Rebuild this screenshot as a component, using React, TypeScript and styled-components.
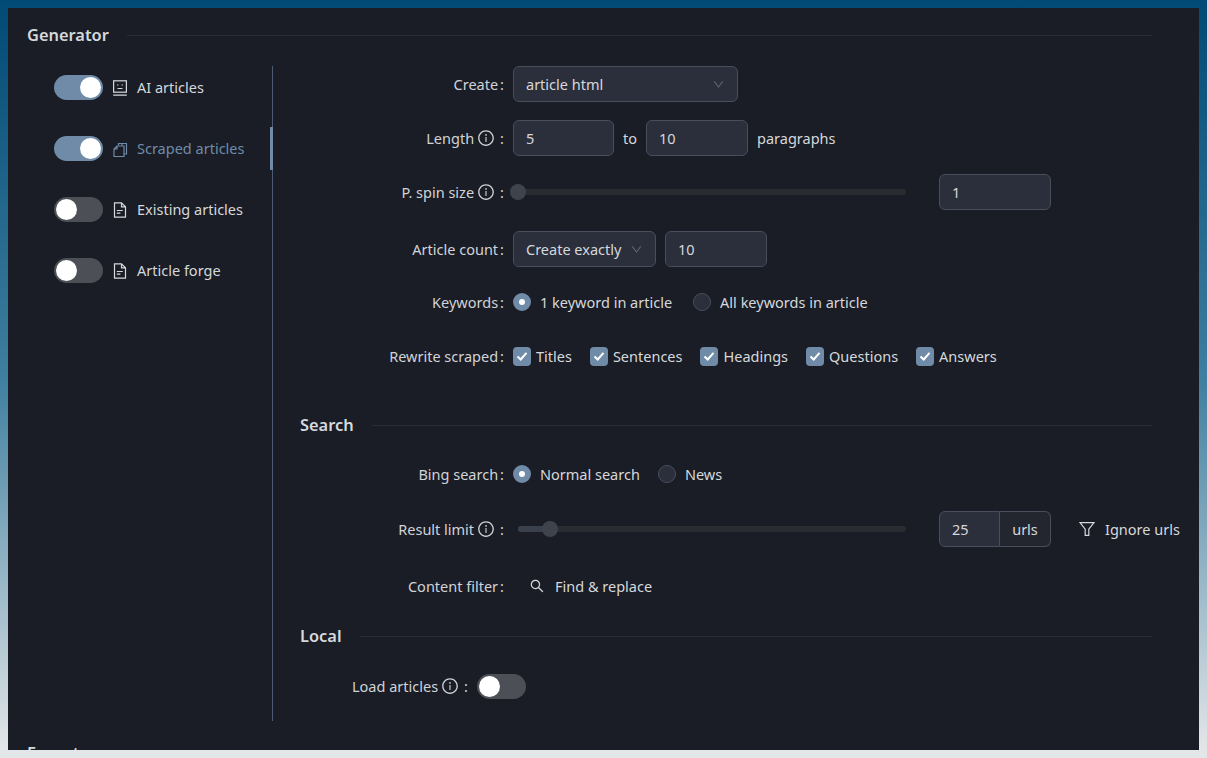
import React from 'react'
import styled, { createGlobalStyle } from 'styled-components'
import { AiOutlineDown, AiOutlineInfoCircle, AiOutlineSearch } from 'react-icons/ai'

const GlobalStyle = createGlobalStyle`
  html, body {
    margin: 0;
    height: 758px;
    overflow: hidden;
  }
  body {
    background: linear-gradient(180deg, #004a75 0%, #3f7f9f 50%, #e3e6e8 99%);
    font-family: 'Noto Sans', 'Open Sans', sans-serif;
    font-size: 14.5px;
    color: #d5d8dc;
  }
`

const Panel = styled.div`
  margin: 8px;
  height: 742px;
  box-sizing: border-box;
  background: #1a1d25;
  padding: 14px 47px 0 19px;
  overflow: hidden;
`
const Heading = styled.div<{ $mt?: number }>`
  display: flex;
  align-items: center;
  gap: 18px;
  margin-top: ${({ $mt }) => $mt ?? 0}px;
  font-size: 16.4px;
  font-weight: 600;
  line-height: 26px;
  color: #d5d9de;

  &:after {
    content: '';
    flex: 1;
    height: 1px;
    background: #2a2d35;
  }
`
const Body = styled.div`
  display: flex;
  margin-top: 18px;
  height: 655px;
`
const Tabs = styled.div`
  width: 246px;
  flex-shrink: 0;
  box-sizing: border-box;
  border-right: 1px solid #4d5a74;
  display: flex;
  flex-direction: column;
  gap: 18px;
`
const Tab = styled.div<{ $active?: boolean }>`
  position: relative;
  height: 43px;
  display: flex;
  align-items: center;
  padding-left: 27px;
  color: ${({ $active }) => ($active ? '#6f8ba8' : '#d5d8dc')};

  ${({ $active }) =>
    $active &&
    `&:after {
      content: '';
      position: absolute;
      right: -1px;
      top: 0;
      bottom: 0;
      width: 3px;
      background: #6f8ba8;
    }`}
`
const TabLabel = styled.span`
  margin-bottom: 2px;
  white-space: nowrap;
`
const TabIcon = styled.svg`
  width: 16px;
  height: 16px;
  flex-shrink: 0;
  margin: 0 9px;
  fill: none;
  stroke: currentColor;
  stroke-width: 1.2;
`
const Toggle = styled.span<{ $on?: boolean }>`
  display: inline-block;
  position: relative;
  flex-shrink: 0;
  width: 49px;
  height: 25px;
  border-radius: 13px;
  background: ${({ $on }) => ($on ? '#6f8ba8' : '#4d4f57')};

  &:after {
    content: '';
    position: absolute;
    top: 2px;
    left: ${({ $on }) => ($on ? '26px' : '2px')};
    width: 21px;
    height: 21px;
    border-radius: 50%;
    background: #fff;
  }
`
const Content = styled.div`
  flex: 1;
  min-width: 0;
  padding-left: 27px;
  display: flex;
  flex-direction: column;
`
const Row = styled.div<{ $h?: number; $mt?: number }>`
  display: flex;
  align-items: center;
  height: ${({ $h }) => $h ?? 36}px;
  margin-top: ${({ $mt }) => $mt ?? 0}px;
`
const Label = styled.div<{ $w?: number }>`
  width: ${({ $w }) => $w ?? 204}px;
  margin-right: 9px;
  flex-shrink: 0;
  display: flex;
  justify-content: flex-end;
  align-items: center;
  white-space: nowrap;
  color: #d0d3d8;
`
const Info = styled(AiOutlineInfoCircle)`
  font-size: 18px;
  margin: 0 3px;
`
const Colon = styled.span`
  margin-left: 2px;
`
const Field = styled.div<{ $w: number; $between?: boolean; $ml?: number }>`
  width: ${({ $w }) => $w}px;
  height: 36px;
  box-sizing: border-box;
  flex-shrink: 0;
  margin-left: ${({ $ml }) => $ml ?? 0}px;
  border: 1px solid #4a4d5c;
  border-radius: 6px;
  background: #2b2e3b;
  padding: 0 12px;
  display: flex;
  align-items: center;
  justify-content: ${({ $between }) => ($between ? 'space-between' : 'flex-start')};
  color: #d5d8dc;
  white-space: nowrap;

  svg {
    font-size: 13px;
    color: #62656f;
  }
`
const Text = styled.span`
  margin: 0 9px;
  white-space: nowrap;
`
const Track = styled.div`
  position: relative;
  width: 388px;
  height: 6px;
  margin: 0 33px 0 5px;
  flex-shrink: 0;
  border-radius: 3px;
  background: #2a2c31;
`
const Fill = styled.div`
  height: 100%;
  border-radius: 3px;
  background: #3a414d;
`
const Handle = styled.div`
  position: absolute;
  top: -5px;
  width: 16px;
  height: 16px;
  margin-left: -8px;
  border-radius: 50%;
  background: #3e434d;
`
const Group = styled.div`
  display: flex;
  align-items: center;
`
const Addon = styled.div`
  width: 51px;
  height: 36px;
  box-sizing: border-box;
  border: 1px solid #4a4d5c;
  border-left: 0;
  border-radius: 0 6px 6px 0;
  background: #24262f;
  display: flex;
  align-items: center;
  justify-content: center;
`
const LeftField = styled(Field)`
  border-radius: 6px 0 0 6px;
`
const Radio = styled.span<{ $on?: boolean }>`
  width: 18px;
  height: 18px;
  box-sizing: border-box;
  flex-shrink: 0;
  border-radius: 50%;
  border: ${({ $on }) => ($on ? '6px solid #6f8ba8' : '1px solid #4a4d5c')};
  background: ${({ $on }) => ($on ? '#fff' : '#2b2e3b')};
`
const Option = styled.div<{ $gap: number; $mr: number }>`
  display: flex;
  align-items: center;
  gap: ${({ $gap }) => $gap}px;
  margin-right: ${({ $mr }) => $mr}px;
  white-space: nowrap;
`
const Check = styled.span`
  width: 18px;
  height: 19px;
  flex-shrink: 0;
  border-radius: 4px;
  background: #6f8ba8;
  display: flex;
  align-items: center;
  justify-content: center;

  svg {
    width: 12px;
    height: 12px;
    fill: none;
    stroke: #fff;
    stroke-width: 2;
  }
`
const LinkBtn = styled.div<{ $ml: number }>`
  display: flex;
  align-items: center;
  gap: 10px;
  margin-left: ${({ $ml }) => $ml}px;
  white-space: nowrap;

  svg {
    flex-shrink: 0;
    font-size: 16px;
  }
`
const FilterIcon = styled.svg`
  width: 16px;
  height: 16px;
  fill: none;
  stroke: currentColor;
  stroke-width: 1.2;
`
const NextHeading = styled.div`
  margin-top: 20px;
  font-size: 16.4px;
  font-weight: 600;
  line-height: 24px;
  color: #d5d9de;
`

function Face() {
  return (
    <TabIcon viewBox="0 0 16 16">
      <rect x="1.6" y="0.8" width="12.8" height="11.4" />
      <path d="M5 5h1.4M9.6 5h1.4M5.5 8.5h5M1.2 15.2h13.6" />
    </TabIcon>
  )
}
function Copies() {
  return (
    <TabIcon viewBox="0 0 16 16">
      <path d="M6.5 4.5V2.5h8v10.5H12M10 2.5V4.5" />
      <path d="M5 5h7v10.5H2V8zM5 5v3H2" />
    </TabIcon>
  )
}
function FileLines() {
  return (
    <TabIcon viewBox="0 0 16 16">
      <path d="M2.5 0.8h7l4 4v10.4h-11zM9.5 0.8v4h4" />
      <path d="M4.8 8.5h6M4.8 11.2h3.6" />
    </TabIcon>
  )
}

const Box = ({ label }: { label: string }) => (
  <Option $gap={5} $mr={18}>
    <Check>
      <svg viewBox="0 0 12 12">
        <path d="M1.5 6.5L4.7 9.5L10.5 2.8" />
      </svg>
    </Check>
    {label}
  </Option>
)

export default function App() {
  return (
    <>
      <GlobalStyle />
      <Panel>
        <Heading>Generator</Heading>
        <Body>
          <Tabs>
            <Tab>
              <Toggle $on />
              <Face />
              <TabLabel>AI articles</TabLabel>
            </Tab>
            <Tab $active>
              <Toggle $on />
              <Copies />
              <TabLabel>Scraped articles</TabLabel>
            </Tab>
            <Tab>
              <Toggle />
              <FileLines />
              <TabLabel>Existing articles</TabLabel>
            </Tab>
            <Tab>
              <Toggle />
              <FileLines />
              <TabLabel>Article forge</TabLabel>
            </Tab>
          </Tabs>
          <Content>
            <Row>
              <Label>Create<Colon>:</Colon></Label>
              <Field $w={225} $between>
                article html
                <AiOutlineDown />
              </Field>
            </Row>
            <Row $mt={18}>
              <Label>Length<Info /><Colon>:</Colon></Label>
              <Field $w={101}>5</Field>
              <Text>to</Text>
              <Field $w={102}>10</Field>
              <Text>paragraphs</Text>
            </Row>
            <Row $mt={18}>
              <Label>P. spin size<Info /><Colon>:</Colon></Label>
              <Track>
                <Handle style={{ left: 0 }} />
              </Track>
              <Field $w={112}>1</Field>
            </Row>
            <Row $mt={21}>
              <Label>Article count<Colon>:</Colon></Label>
              <Field $w={143} $between>
                Create exactly
                <AiOutlineDown />
              </Field>
              <Field $w={102} $ml={9}>10</Field>
            </Row>
            <Row $mt={17}>
              <Label>Keywords<Colon>:</Colon></Label>
              <Option $gap={9} $mr={21}>
                <Radio $on />1 keyword in article
              </Option>
              <Option $gap={9} $mr={0}>
                <Radio />All keywords in article
              </Option>
            </Row>
            <Row $mt={18}>
              <Label>Rewrite scraped<Colon>:</Colon></Label>
              <Box label="Titles" />
              <Box label="Sentences" />
              <Box label="Headings" />
              <Box label="Questions" />
              <Box label="Answers" />
            </Row>
            <Heading $mt={38}>Search</Heading>
            <Row $mt={18}>
              <Label>Bing search<Colon>:</Colon></Label>
              <Option $gap={9} $mr={18}>
                <Radio $on />Normal search
              </Option>
              <Option $gap={9} $mr={0}>
                <Radio />News
              </Option>
            </Row>
            <Row $mt={19}>
              <Label>Result limit<Info /><Colon>:</Colon></Label>
              <Track>
                <Fill style={{ width: '8.2%' }} />
                <Handle style={{ left: '8.2%' }} />
              </Track>
              <Group>
                <LeftField $w={61}>25</LeftField>
                <Addon>urls</Addon>
              </Group>
              <LinkBtn $ml={28}>
                <FilterIcon viewBox="0 0 16 16">
                  <path d="M1 1.6h14L9.8 8.2v6.2H6.2V8.2z" />
                </FilterIcon>
                Ignore urls
              </LinkBtn>
            </Row>
            <Row $mt={21}>
              <Label>Content filter<Colon>:</Colon></Label>
              <LinkBtn $ml={16}>
                <AiOutlineSearch />
                Find &amp; replace
              </LinkBtn>
            </Row>
            <Heading $mt={19}>Local</Heading>
            <Row $mt={19}>
              <Label $w={168}>Load articles<Info /><Colon>:</Colon></Label>
              <Toggle />
            </Row>
          </Content>
        </Body>
        <NextHeading>Export</NextHeading>
      </Panel>
    </>
  )
}
